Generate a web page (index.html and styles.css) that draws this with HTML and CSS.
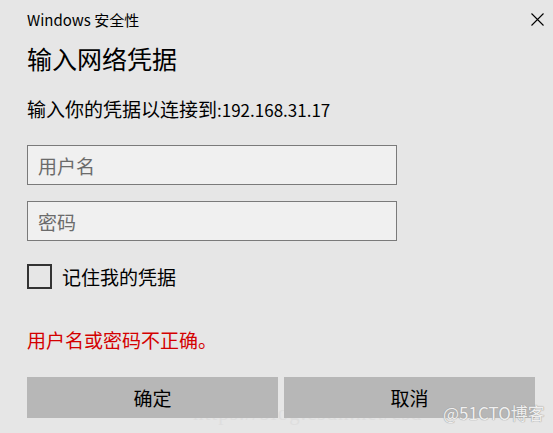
FILE: index.html
```html
<!DOCTYPE html>
<html lang="zh-CN">
<head>
    <meta charset="UTF-8">
    <meta name="viewport" content="width=device-width, initial-scale=1.0">
    <title>Windows 安全性</title>
    <link rel="stylesheet" href="styles.css">
</head>
<body>
    <div class="dialog">
        <div class="title-bar">
            <span class="title">Windows 安全性</span>
            <button class="close" aria-label="关闭">
                <svg width="13" height="13" viewBox="0 0 13 13">
                    <path d="M0.5 0.5 L12.5 12.5 M12.5 0.5 L0.5 12.5" stroke="#000" stroke-width="1.1" fill="none"/>
                </svg>
            </button>
        </div>

        <h1>输入网络凭据</h1>
        <p class="subtitle">输入你的凭据以连接到<span class="host">:192.168.31.17</span></p>

        <div class="fields">
            <input type="text" placeholder="用户名">
            <input type="password" placeholder="密码">
        </div>

        <label class="remember">
            <span class="box"></span>
            <span>记住我的凭据</span>
        </label>

        <p class="error">用户名或密码不正确。</p>

        <div class="actions">
            <button class="btn">确定</button>
            <button class="btn">取消</button>
        </div>
    </div>

    <!-- watermarks from the original screenshot -->
    <span class="mark-url">https://blog.csdn.net/csd</span>
    <span class="mark-site">@51CTO博客</span>
</body>
</html>
```

FILE: styles.css
```css
/* Windows security dialog */
body {
    margin: 0;
    background-color: #e6e6e6;
    font-family: "Noto Sans CJK SC", sans-serif;
    color: #000;
    width: 553px;
    height: 433px;
    overflow: hidden;
    position: relative;
}

.dialog {
    padding-left: 27px;
}

.title-bar {
    display: flex;
    justify-content: space-between;
    align-items: flex-start;
    padding: 8px 9px 0 0;
}

.title {
    font-size: 15px;
    line-height: 24px;
}

.close {
    border: none;
    background: none;
    padding: 0;
    margin-top: 5px;
    width: 13px;
    height: 13px;
    display: flex;
}

h1 {
    font-size: 25px;
    font-weight: 400;
    line-height: 34px;
    margin: 9px 0 0;
}

.subtitle {
    font-size: 19px;
    line-height: 26px;
    margin: 21px 0 0;
}

.subtitle .host {
    font-size: 17px;
}

.fields {
    display: flex;
    flex-direction: column;
    gap: 16px;
    margin-top: 22px;
}

.fields input {
    box-sizing: border-box;
    width: 370px;
    height: 40px;
    padding: 0 10px;
    border: 1px solid #7a7a7a;
    background-color: #f0f0f0;
    font-family: inherit;
    font-size: 19px;
    outline: none;
}

.fields input::placeholder {
    color: #6b6b6b;
}

.remember {
    display: flex;
    align-items: center;
    gap: 10px;
    margin-top: 23px;
    height: 25px;
    font-size: 19px;
}

.remember .box {
    box-sizing: border-box;
    width: 25px;
    height: 25px;
    border: 2px solid #333;
}

.error {
    color: #d40000;
    font-size: 19px;
    line-height: 26px;
    margin: 38px 0 0;
}

.actions {
    display: flex;
    gap: 6px;
    margin-top: 24px;
}

.btn {
    position: relative;
    z-index: 1; /* sits over the watermark */
    width: 251px;
    height: 41px;
    border: none;
    background-color: #b7b7b7;
    font-family: inherit;
    font-size: 19px;
    color: #000;
    padding: 0;
}

/* faint, mostly hidden under the buttons */
.mark-url {
    position: absolute;
    left: 193px;
    top: 401px;
    font-family: "Liberation Serif", serif;
    font-size: 21px;
    color: #dedede;
    letter-spacing: 1px;
}

.mark-site {
    position: absolute;
    z-index: 2;
    left: 443px;
    top: 400px;
    font-size: 17px;
    color: #efefef;
    text-shadow: 0 0 1px #9a9a9a, 0 0 1px #9a9a9a;
}
```
